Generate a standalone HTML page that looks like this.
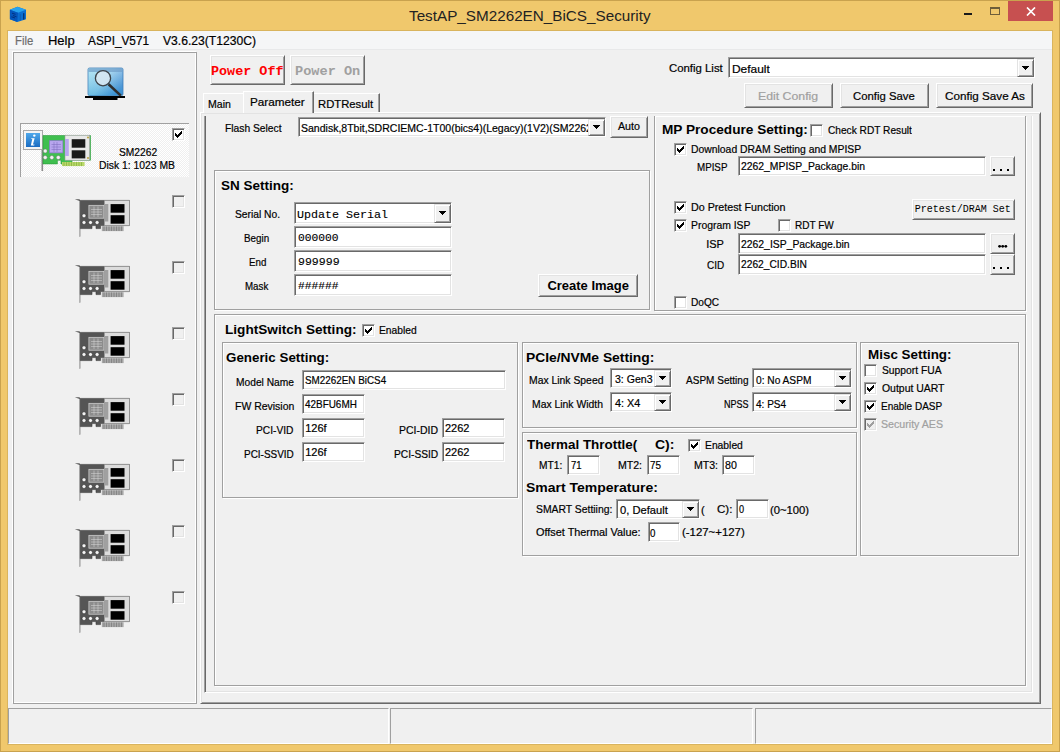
<!DOCTYPE html><html><head><meta charset="utf-8"><style>
*{box-sizing:border-box;margin:0;padding:0}
html,body{width:1060px;height:752px;overflow:hidden}
body{background:#F0C86C;position:relative;font-family:"Liberation Sans",sans-serif;font-size:11px;color:#000}
.a{position:absolute}
.t{position:absolute;white-space:nowrap;transform-origin:0 0}
.w{position:absolute;overflow:hidden}
.sk{position:absolute;background:#fff;border-top:1px solid #A0A0A0;border-left:1px solid #A0A0A0;border-bottom:1px solid #fff;border-right:1px solid #fff;box-shadow:inset 1px 1px 0 #696969,inset -1px -1px 0 #E3E3E3}
.bt{position:absolute;background:#F0F0F0;border-top:1px solid #fff;border-left:1px solid #fff;border-bottom:1px solid #696969;border-right:1px solid #696969;box-shadow:inset 1px 1px 0 #E3E3E3,inset -1px -1px 0 #A0A0A0}
.et{position:absolute;border:1px solid #A0A0A0;box-shadow:inset 1px 1px 0 #fff,1px 1px 0 #fff}
.cb{position:absolute;background:#fff;border-top:1px solid #A0A0A0;border-left:1px solid #A0A0A0;border-bottom:1px solid #fff;border-right:1px solid #fff;box-shadow:inset 1px 1px 0 #696969,inset -1px -1px 0 #E3E3E3}
.dd{position:absolute;top:1px;right:0;bottom:0;background:#F0F0F0;border-top:1px solid #E3E3E3;border-left:1px solid #E3E3E3;border-bottom:1px solid #696969;border-right:1px solid #696969;box-shadow:inset 1px 1px 0 #fff,inset -1px -1px 0 #A0A0A0}
</style></head><body>
<div class="a" style="left:0;top:0;width:1060px;height:752px;border:1px solid #C9A24E"></div>
<svg class="a" style="left:6px;top:4px" width="24" height="22" viewBox="6 4 24 22"><path d="M17.5 6.8 L26 9.8 L26 19.2 L17.3 22 L9.9 19.2 L9.9 9.8 Z" fill="#0A6ED2"/><path d="M17.5 6.8 L26 9.8 L18 12.8 L9.9 9.8 Z" fill="#26A2EE"/><path d="M9.9 9.8 L18 12.8 L17.3 22 L9.9 19.2 Z" fill="#0456BC"/><path d="M12 13.2 L15.5 14.3 M13 15.5 L16.5 16.8 M11.5 16.8 L15 18" stroke="#022E78" stroke-width="0.9"/><path d="M23.8 13.2 V19.6" stroke="#021E50" stroke-width="1"/><path d="M20.3 14.2 V20.5" stroke="#0A5AB0" stroke-width="0.8"/></svg>
<div class="t" id="t0" style="left:409.00px;top:7px;font-size:15px;line-height:18px;color:#222;transform:scaleX(1.0168);">TestAP_SM2262EN_BiCS_Security</div>
<div class="a" style="left:964px;top:13px;width:8px;height:2px;background:#1A1A1A"></div>
<div class="a" style="left:990px;top:7px;width:10px;height:8px;border:1px solid #6E5E3A;border-top-width:2px"></div>
<div class="a" style="left:1008px;top:1px;width:45px;height:20px;background:#C75050"></div>
<svg class="a" style="left:1026px;top:7px" width="10" height="9" viewBox="0 0 10 9"><path d="M1 0.5 L9 8.5 M9 0.5 L1 8.5" stroke="#fff" stroke-width="1.7"/></svg>
<div class="a" style="left:7px;top:30px;width:1046px;height:715px;background:#F0F0F0;border:1px solid #D9B45E"></div>
<div class="a" style="left:8px;top:31px;width:1044px;height:19px;background:#F5F6F7;border-bottom:1px solid #E8E9EA"></div>
<div class="t" id="t1" style="left:15.22px;top:34px;font-size:12px;line-height:15px;color:#6D6D6D;-webkit-text-stroke:0.2px currentColor;transform:scaleX(0.9421);">File</div>
<div class="t" id="t2" style="left:48.00px;top:34px;font-size:12px;line-height:15px;-webkit-text-stroke:0.2px currentColor;transform:scaleX(1.0800);">Help</div>
<div class="t" id="t3" style="left:88.00px;top:34px;font-size:12px;line-height:15px;-webkit-text-stroke:0.2px currentColor;transform:scaleX(0.9839);">ASPI_V571</div>
<div class="t" id="t4" style="left:163.00px;top:34px;font-size:12px;line-height:15px;-webkit-text-stroke:0.2px currentColor;transform:scaleX(1.0109);">V3.6.23(T1230C)</div>
<div class="a" style="left:13px;top:52px;width:184px;height:652px;border:1px solid #A0A0A0;box-shadow:-1px -1px 0 #fff,inset -1px -1px 0 #fff"></div>
<svg class="a" style="left:80px;top:62px" width="50" height="42" viewBox="0 0 50 42"><defs><linearGradient id="sg" x1="0" y1="0" x2="1" y2="0.6"><stop offset="0" stop-color="#9fe0f2"/><stop offset="0.55" stop-color="#8cc8ea"/><stop offset="1" stop-color="#3d86d2"/></linearGradient><linearGradient id="sg2" x1="0" y1="0" x2="0" y2="1"><stop offset="0" stop-color="#ffffff" stop-opacity="0.25"/><stop offset="1" stop-color="#2aa0d0" stop-opacity="0.35"/></linearGradient></defs><rect x="8" y="6" width="35" height="27.5" rx="1.5" fill="url(#sg)" stroke="#3f7fb8" stroke-width="0.8"/><rect x="8.5" y="6.5" width="34" height="27" fill="url(#sg2)"/><rect x="8.5" y="6.5" width="34" height="3.5" fill="#6f9cc8" opacity="0.7"/><circle cx="23" cy="16.2" r="7.6" fill="#dce9f2" fill-opacity="0.85" stroke="#3c4248" stroke-width="1.3"/><path d="M28.6 22.2 L40.8 33.6" stroke="#2e2e2e" stroke-width="2.6"/><path d="M5 34 H45 V36 H37.5 V38 H13 V36 H5 Z" fill="#000"/></svg>
<div class="a" style="left:20px;top:123px;width:169px;height:54px;background:repeating-conic-gradient(#fff 0 25%,#EFEFEF 0 50%) 0 0/2px 2px;border-top:1px solid #A0A0A0;border-left:1px solid #A0A0A0"></div>
<svg class="a" style="left:23px;top:130px" width="20" height="20" viewBox="0 0 20 20"><defs><linearGradient id="ig" x1="0" y1="0" x2="0" y2="1"><stop offset="0" stop-color="#4fa8ea"/><stop offset="1" stop-color="#1a6cc2"/></linearGradient></defs><rect x="0.5" y="0.5" width="19" height="19" fill="#f4f4f4" stroke="#a8a8a8"/><rect x="3" y="3" width="14" height="14" fill="url(#ig)"/><circle cx="11.3" cy="5.6" r="1.2" fill="#fff"/><path d="M8.4 8.2 H11.6 L10 14.6 H11.5 L11.2 15.4 H7.8 L9.3 9 H8.2 Z" fill="#fff"/></svg>
<svg class="a" style="left:0;top:0" width="200" height="180" viewBox="0 0 200 180"><rect x="41.5" y="150" width="1.6" height="21" fill="#8a8a8a"/><path d="M43 135.5 H90.5 V160.2 H72 V163.9 H61 V160.2 H57.4 V163.9 H43 Z" fill="#3fbf4f" stroke="#2c9a3a" stroke-width="0.6"/><rect x="62" y="162" width="22.6" height="4.1" fill="#b9d86a"/><path d="M64 162.2 V166 M66.5 162.2 V166 M69 162.2 V166 M71.5 162.2 V166 M74 162.2 V166 M76.5 162.2 V166 M79 162.2 V166 M81.5 162.2 V166" stroke="#7fae3a" stroke-width="0.7"/><rect x="49.6" y="140.7" width="13.3" height="12.2" fill="#b8a6ee" stroke="#8a78c8" stroke-width="0.7"/><path d="M51.5 144.5 H61 M51.5 147 H61 M51.5 149.5 H61 M54 142 V152 M57 142 V152" stroke="#7a68b8" stroke-width="0.5"/><rect x="65" y="135.2" width="24.7" height="25" fill="#e8e8e8" stroke="#9a9a9a" stroke-width="0.6"/><rect x="65" y="139" width="3.8" height="17" fill="#b8a6ee"/><rect x="71.7" y="139.2" width="13.6" height="8.5" fill="#1a1a1a"/><rect x="71.7" y="150.3" width="13.6" height="8.1" fill="#1a1a1a"/><circle cx="88" cy="137.5" r="1" fill="#b8a040"/><circle cx="88" cy="158" r="1" fill="#b8a040"/><circle cx="45.2" cy="151" r="2" fill="#f2f2f2" stroke="#666" stroke-width="0.4"/><circle cx="45.2" cy="157.5" r="2" fill="#f2f2f2" stroke="#666" stroke-width="0.4"/><circle cx="51.8" cy="157.5" r="2" fill="#f2f2f2" stroke="#666" stroke-width="0.4"/><circle cx="58.3" cy="157.5" r="2" fill="#f2f2f2" stroke="#666" stroke-width="0.4"/></svg>
<div class="cb" style="left:172px;top:128px;width:13px;height:13px;background:#fff;"><svg width="7" height="7" style="position:absolute;left:2px;top:2px" shape-rendering="crispEdges"><path d="M6 0h1v1h-1zM5 1h2v1h-2zM0 2h1v1h-1zM4 2h3v1h-3zM0 3h2v1h-2zM3 3h3v1h-3zM0 4h5v1h-5zM1 5h3v1h-3zM2 6h1v1h-1z" fill="#000"/></svg></div>
<div class="t" id="t5" style="left:118.76px;top:145px;font-size:11px;line-height:14px;-webkit-text-stroke:0.2px currentColor;transform:scaleX(0.9317);">SM2262</div>
<div class="t" id="t6" style="left:99.22px;top:158px;font-size:11px;line-height:14px;-webkit-text-stroke:0.2px currentColor;transform:scaleX(0.9413);">Disk 1: 1023 MB</div>
<svg class="a" style="left:70px;top:195px" width="65" height="42" viewBox="70 195 65 42"><path d="M74.8 199.2 H79.5 L80.3 200.4 V236.6 L79.6 237 V201 Z" fill="#5a5a5a"/><path d="M80.3 200.4 H129.4 V225.6 H100.5 V228.6 H96 V225.6 H92 V228.6 H80.3 Z" fill="#555555" stroke="#3a3a3a" stroke-width="0.6"/><rect x="101.8" y="226.2" width="21.8" height="4.9" fill="#a8a8a8"/><path d="M104 226.5 V231 M106.5 226.5 V231 M109 226.5 V231 M111.5 226.5 V231 M114 226.5 V231 M116.5 226.5 V231 M119 226.5 V231 M121.5 226.5 V231" stroke="#777" stroke-width="0.7"/><rect x="88.9" y="205.3" width="15" height="12.9" fill="#8c8c8c" stroke="#d8d8d8" stroke-width="0.7"/><path d="M91 209.5 H102 M91 212 H102 M91 214.5 H102 M94 206.5 V217 M98 206.5 V217" stroke="#d8d8d8" stroke-width="0.5"/><rect x="104.3" y="200.4" width="25.1" height="25.2" fill="#dcdcdc" stroke="#8a8a8a" stroke-width="0.6"/><rect x="104.5" y="204" width="3.8" height="17.5" fill="#a0a0a0"/><rect x="110.6" y="204.1" width="13.9" height="8.6" fill="#000"/><rect x="110.6" y="215.2" width="13.9" height="8.5" fill="#000"/><circle cx="84" cy="215.8" r="2" fill="#f4f4f4" stroke="#222" stroke-width="0.5"/><circle cx="84" cy="222.5" r="2" fill="#f4f4f4" stroke="#222" stroke-width="0.5"/><circle cx="90.5" cy="222.5" r="2" fill="#f4f4f4" stroke="#222" stroke-width="0.5"/><circle cx="97.1" cy="222.5" r="2" fill="#f4f4f4" stroke="#222" stroke-width="0.5"/></svg>
<div class="cb" style="left:172px;top:195px;width:13px;height:13px;background:#F0F0F0;"></div>
<svg class="a" style="left:70px;top:261px" width="65" height="42" viewBox="70 195 65 42"><path d="M74.8 199.2 H79.5 L80.3 200.4 V236.6 L79.6 237 V201 Z" fill="#5a5a5a"/><path d="M80.3 200.4 H129.4 V225.6 H100.5 V228.6 H96 V225.6 H92 V228.6 H80.3 Z" fill="#555555" stroke="#3a3a3a" stroke-width="0.6"/><rect x="101.8" y="226.2" width="21.8" height="4.9" fill="#a8a8a8"/><path d="M104 226.5 V231 M106.5 226.5 V231 M109 226.5 V231 M111.5 226.5 V231 M114 226.5 V231 M116.5 226.5 V231 M119 226.5 V231 M121.5 226.5 V231" stroke="#777" stroke-width="0.7"/><rect x="88.9" y="205.3" width="15" height="12.9" fill="#8c8c8c" stroke="#d8d8d8" stroke-width="0.7"/><path d="M91 209.5 H102 M91 212 H102 M91 214.5 H102 M94 206.5 V217 M98 206.5 V217" stroke="#d8d8d8" stroke-width="0.5"/><rect x="104.3" y="200.4" width="25.1" height="25.2" fill="#dcdcdc" stroke="#8a8a8a" stroke-width="0.6"/><rect x="104.5" y="204" width="3.8" height="17.5" fill="#a0a0a0"/><rect x="110.6" y="204.1" width="13.9" height="8.6" fill="#000"/><rect x="110.6" y="215.2" width="13.9" height="8.5" fill="#000"/><circle cx="84" cy="215.8" r="2" fill="#f4f4f4" stroke="#222" stroke-width="0.5"/><circle cx="84" cy="222.5" r="2" fill="#f4f4f4" stroke="#222" stroke-width="0.5"/><circle cx="90.5" cy="222.5" r="2" fill="#f4f4f4" stroke="#222" stroke-width="0.5"/><circle cx="97.1" cy="222.5" r="2" fill="#f4f4f4" stroke="#222" stroke-width="0.5"/></svg>
<div class="cb" style="left:172px;top:261px;width:13px;height:13px;background:#F0F0F0;"></div>
<svg class="a" style="left:70px;top:327px" width="65" height="42" viewBox="70 195 65 42"><path d="M74.8 199.2 H79.5 L80.3 200.4 V236.6 L79.6 237 V201 Z" fill="#5a5a5a"/><path d="M80.3 200.4 H129.4 V225.6 H100.5 V228.6 H96 V225.6 H92 V228.6 H80.3 Z" fill="#555555" stroke="#3a3a3a" stroke-width="0.6"/><rect x="101.8" y="226.2" width="21.8" height="4.9" fill="#a8a8a8"/><path d="M104 226.5 V231 M106.5 226.5 V231 M109 226.5 V231 M111.5 226.5 V231 M114 226.5 V231 M116.5 226.5 V231 M119 226.5 V231 M121.5 226.5 V231" stroke="#777" stroke-width="0.7"/><rect x="88.9" y="205.3" width="15" height="12.9" fill="#8c8c8c" stroke="#d8d8d8" stroke-width="0.7"/><path d="M91 209.5 H102 M91 212 H102 M91 214.5 H102 M94 206.5 V217 M98 206.5 V217" stroke="#d8d8d8" stroke-width="0.5"/><rect x="104.3" y="200.4" width="25.1" height="25.2" fill="#dcdcdc" stroke="#8a8a8a" stroke-width="0.6"/><rect x="104.5" y="204" width="3.8" height="17.5" fill="#a0a0a0"/><rect x="110.6" y="204.1" width="13.9" height="8.6" fill="#000"/><rect x="110.6" y="215.2" width="13.9" height="8.5" fill="#000"/><circle cx="84" cy="215.8" r="2" fill="#f4f4f4" stroke="#222" stroke-width="0.5"/><circle cx="84" cy="222.5" r="2" fill="#f4f4f4" stroke="#222" stroke-width="0.5"/><circle cx="90.5" cy="222.5" r="2" fill="#f4f4f4" stroke="#222" stroke-width="0.5"/><circle cx="97.1" cy="222.5" r="2" fill="#f4f4f4" stroke="#222" stroke-width="0.5"/></svg>
<div class="cb" style="left:172px;top:327px;width:13px;height:13px;background:#F0F0F0;"></div>
<svg class="a" style="left:70px;top:393px" width="65" height="42" viewBox="70 195 65 42"><path d="M74.8 199.2 H79.5 L80.3 200.4 V236.6 L79.6 237 V201 Z" fill="#5a5a5a"/><path d="M80.3 200.4 H129.4 V225.6 H100.5 V228.6 H96 V225.6 H92 V228.6 H80.3 Z" fill="#555555" stroke="#3a3a3a" stroke-width="0.6"/><rect x="101.8" y="226.2" width="21.8" height="4.9" fill="#a8a8a8"/><path d="M104 226.5 V231 M106.5 226.5 V231 M109 226.5 V231 M111.5 226.5 V231 M114 226.5 V231 M116.5 226.5 V231 M119 226.5 V231 M121.5 226.5 V231" stroke="#777" stroke-width="0.7"/><rect x="88.9" y="205.3" width="15" height="12.9" fill="#8c8c8c" stroke="#d8d8d8" stroke-width="0.7"/><path d="M91 209.5 H102 M91 212 H102 M91 214.5 H102 M94 206.5 V217 M98 206.5 V217" stroke="#d8d8d8" stroke-width="0.5"/><rect x="104.3" y="200.4" width="25.1" height="25.2" fill="#dcdcdc" stroke="#8a8a8a" stroke-width="0.6"/><rect x="104.5" y="204" width="3.8" height="17.5" fill="#a0a0a0"/><rect x="110.6" y="204.1" width="13.9" height="8.6" fill="#000"/><rect x="110.6" y="215.2" width="13.9" height="8.5" fill="#000"/><circle cx="84" cy="215.8" r="2" fill="#f4f4f4" stroke="#222" stroke-width="0.5"/><circle cx="84" cy="222.5" r="2" fill="#f4f4f4" stroke="#222" stroke-width="0.5"/><circle cx="90.5" cy="222.5" r="2" fill="#f4f4f4" stroke="#222" stroke-width="0.5"/><circle cx="97.1" cy="222.5" r="2" fill="#f4f4f4" stroke="#222" stroke-width="0.5"/></svg>
<div class="cb" style="left:172px;top:393px;width:13px;height:13px;background:#F0F0F0;"></div>
<svg class="a" style="left:70px;top:459px" width="65" height="42" viewBox="70 195 65 42"><path d="M74.8 199.2 H79.5 L80.3 200.4 V236.6 L79.6 237 V201 Z" fill="#5a5a5a"/><path d="M80.3 200.4 H129.4 V225.6 H100.5 V228.6 H96 V225.6 H92 V228.6 H80.3 Z" fill="#555555" stroke="#3a3a3a" stroke-width="0.6"/><rect x="101.8" y="226.2" width="21.8" height="4.9" fill="#a8a8a8"/><path d="M104 226.5 V231 M106.5 226.5 V231 M109 226.5 V231 M111.5 226.5 V231 M114 226.5 V231 M116.5 226.5 V231 M119 226.5 V231 M121.5 226.5 V231" stroke="#777" stroke-width="0.7"/><rect x="88.9" y="205.3" width="15" height="12.9" fill="#8c8c8c" stroke="#d8d8d8" stroke-width="0.7"/><path d="M91 209.5 H102 M91 212 H102 M91 214.5 H102 M94 206.5 V217 M98 206.5 V217" stroke="#d8d8d8" stroke-width="0.5"/><rect x="104.3" y="200.4" width="25.1" height="25.2" fill="#dcdcdc" stroke="#8a8a8a" stroke-width="0.6"/><rect x="104.5" y="204" width="3.8" height="17.5" fill="#a0a0a0"/><rect x="110.6" y="204.1" width="13.9" height="8.6" fill="#000"/><rect x="110.6" y="215.2" width="13.9" height="8.5" fill="#000"/><circle cx="84" cy="215.8" r="2" fill="#f4f4f4" stroke="#222" stroke-width="0.5"/><circle cx="84" cy="222.5" r="2" fill="#f4f4f4" stroke="#222" stroke-width="0.5"/><circle cx="90.5" cy="222.5" r="2" fill="#f4f4f4" stroke="#222" stroke-width="0.5"/><circle cx="97.1" cy="222.5" r="2" fill="#f4f4f4" stroke="#222" stroke-width="0.5"/></svg>
<div class="cb" style="left:172px;top:459px;width:13px;height:13px;background:#F0F0F0;"></div>
<svg class="a" style="left:70px;top:525px" width="65" height="42" viewBox="70 195 65 42"><path d="M74.8 199.2 H79.5 L80.3 200.4 V236.6 L79.6 237 V201 Z" fill="#5a5a5a"/><path d="M80.3 200.4 H129.4 V225.6 H100.5 V228.6 H96 V225.6 H92 V228.6 H80.3 Z" fill="#555555" stroke="#3a3a3a" stroke-width="0.6"/><rect x="101.8" y="226.2" width="21.8" height="4.9" fill="#a8a8a8"/><path d="M104 226.5 V231 M106.5 226.5 V231 M109 226.5 V231 M111.5 226.5 V231 M114 226.5 V231 M116.5 226.5 V231 M119 226.5 V231 M121.5 226.5 V231" stroke="#777" stroke-width="0.7"/><rect x="88.9" y="205.3" width="15" height="12.9" fill="#8c8c8c" stroke="#d8d8d8" stroke-width="0.7"/><path d="M91 209.5 H102 M91 212 H102 M91 214.5 H102 M94 206.5 V217 M98 206.5 V217" stroke="#d8d8d8" stroke-width="0.5"/><rect x="104.3" y="200.4" width="25.1" height="25.2" fill="#dcdcdc" stroke="#8a8a8a" stroke-width="0.6"/><rect x="104.5" y="204" width="3.8" height="17.5" fill="#a0a0a0"/><rect x="110.6" y="204.1" width="13.9" height="8.6" fill="#000"/><rect x="110.6" y="215.2" width="13.9" height="8.5" fill="#000"/><circle cx="84" cy="215.8" r="2" fill="#f4f4f4" stroke="#222" stroke-width="0.5"/><circle cx="84" cy="222.5" r="2" fill="#f4f4f4" stroke="#222" stroke-width="0.5"/><circle cx="90.5" cy="222.5" r="2" fill="#f4f4f4" stroke="#222" stroke-width="0.5"/><circle cx="97.1" cy="222.5" r="2" fill="#f4f4f4" stroke="#222" stroke-width="0.5"/></svg>
<div class="cb" style="left:172px;top:525px;width:13px;height:13px;background:#F0F0F0;"></div>
<svg class="a" style="left:70px;top:591px" width="65" height="42" viewBox="70 195 65 42"><path d="M74.8 199.2 H79.5 L80.3 200.4 V236.6 L79.6 237 V201 Z" fill="#5a5a5a"/><path d="M80.3 200.4 H129.4 V225.6 H100.5 V228.6 H96 V225.6 H92 V228.6 H80.3 Z" fill="#555555" stroke="#3a3a3a" stroke-width="0.6"/><rect x="101.8" y="226.2" width="21.8" height="4.9" fill="#a8a8a8"/><path d="M104 226.5 V231 M106.5 226.5 V231 M109 226.5 V231 M111.5 226.5 V231 M114 226.5 V231 M116.5 226.5 V231 M119 226.5 V231 M121.5 226.5 V231" stroke="#777" stroke-width="0.7"/><rect x="88.9" y="205.3" width="15" height="12.9" fill="#8c8c8c" stroke="#d8d8d8" stroke-width="0.7"/><path d="M91 209.5 H102 M91 212 H102 M91 214.5 H102 M94 206.5 V217 M98 206.5 V217" stroke="#d8d8d8" stroke-width="0.5"/><rect x="104.3" y="200.4" width="25.1" height="25.2" fill="#dcdcdc" stroke="#8a8a8a" stroke-width="0.6"/><rect x="104.5" y="204" width="3.8" height="17.5" fill="#a0a0a0"/><rect x="110.6" y="204.1" width="13.9" height="8.6" fill="#000"/><rect x="110.6" y="215.2" width="13.9" height="8.5" fill="#000"/><circle cx="84" cy="215.8" r="2" fill="#f4f4f4" stroke="#222" stroke-width="0.5"/><circle cx="84" cy="222.5" r="2" fill="#f4f4f4" stroke="#222" stroke-width="0.5"/><circle cx="90.5" cy="222.5" r="2" fill="#f4f4f4" stroke="#222" stroke-width="0.5"/><circle cx="97.1" cy="222.5" r="2" fill="#f4f4f4" stroke="#222" stroke-width="0.5"/></svg>
<div class="cb" style="left:172px;top:591px;width:13px;height:13px;background:#F0F0F0;"></div>
<div class="bt" style="left:210px;top:55px;width:75px;height:30px;"></div>
<div class="bt" style="left:290px;top:55px;width:75px;height:30px;"></div>
<div class="t" id="t7" style="left:211.00px;top:64px;font-size:13.3px;line-height:16px;font-weight:bold;color:#FF0000;font-family:'Liberation Mono',monospace;transform:scaleX(1.0099);">Power Off</div>
<div class="t" id="t8" style="left:295.18px;top:64px;font-size:13.3px;line-height:16px;font-weight:bold;color:#A0A0A0;font-family:'Liberation Mono',monospace;transform:scaleX(1.0222);">Power On</div>
<div class="t" id="t9" style="left:669.00px;top:61px;font-size:11px;line-height:14px;-webkit-text-stroke:0.2px currentColor;transform:scaleX(1.0340);">Config List</div>
<div class="sk" style="left:728px;top:57px;width:307px;height:21px;"><div class="dd" style="width:17px"><svg width="7" height="4" style="position:absolute;left:4px;top:6px" shape-rendering="crispEdges"><path d="M0 0h7v1h-7zM1 1h5v1h-5zM2 2h3v1h-3zM3 3h1v1h-1z" fill="#000"/></svg></div></div>
<div class="t" id="t10" style="left:731.74px;top:62px;font-size:11px;line-height:14px;-webkit-text-stroke:0.2px currentColor;transform:scaleX(1.0857);">Default</div>
<div class="bt" style="left:744px;top:83px;width:89px;height:25px;"></div>
<div class="bt" style="left:840px;top:83px;width:89px;height:25px;"></div>
<div class="bt" style="left:936px;top:83px;width:97px;height:25px;"></div>
<div class="t" id="t11" style="left:758.15px;top:89px;font-size:11px;line-height:14px;color:#A0A0A0;-webkit-text-stroke:0.2px currentColor;transform:scaleX(1.1170);">Edit Config</div>
<div class="t" id="t12" style="left:853.01px;top:89px;font-size:11px;line-height:14px;-webkit-text-stroke:0.2px currentColor;transform:scaleX(1.0295);">Config Save</div>
<div class="t" id="t13" style="left:944.62px;top:89px;font-size:11px;line-height:14px;-webkit-text-stroke:0.2px currentColor;transform:scaleX(1.0618);">Config Save As</div>
<div class="a" style="left:200px;top:112px;width:841px;height:592px;border-left:1px solid #fff;border-top:1px solid #fff;border-right:1px solid #696969;border-bottom:1px solid #696969;box-shadow:inset 1px 1px 0 #E3E3E3,inset -1px -1px 0 #A0A0A0"></div>
<div class="a" style="left:203px;top:93px;width:41px;height:20px;border-left:1px solid #fff;border-top:1px solid #fff;border-right:1px solid #fff;background:#F0F0F0"></div>
<div class="a" style="left:313px;top:93px;width:67px;height:19px;border-top:1px solid #fff;border-right:1px solid #696969;box-shadow:inset -1px 0 0 #A0A0A0;background:#F0F0F0"></div>
<div class="a" style="left:243px;top:91px;width:71px;height:22px;border-left:1px solid #fff;border-top:1px solid #fff;border-right:1px solid #696969;box-shadow:inset -1px 0 0 #A0A0A0;background:#F0F0F0"></div>
<div class="t" id="t14" style="left:208.38px;top:97px;font-size:11px;line-height:14px;-webkit-text-stroke:0.2px currentColor;transform:scaleX(0.9583);">Main</div>
<div class="t" id="t15" style="left:250.00px;top:95px;font-size:11px;line-height:14px;-webkit-text-stroke:0.2px currentColor;transform:scaleX(1.0654);">Parameter</div>
<div class="t" id="t16" style="left:318.00px;top:97px;font-size:11px;line-height:14px;-webkit-text-stroke:0.2px currentColor;transform:scaleX(1.0241);">RDTResult</div>
<div class="a" style="left:204px;top:116px;width:829px;height:577px;border-left:1px solid #A0A0A0;border-right:1px solid #fff;border-bottom:1px solid #fff;box-shadow:inset 1px 0 0 #696969,inset -1px -1px 0 #E3E3E3"></div>
<div class="t" id="t17" style="left:225.41px;top:121px;font-size:11px;line-height:14px;-webkit-text-stroke:0.2px currentColor;transform:scaleX(0.9344);">Flash Select</div>
<div class="sk" style="left:298px;top:117px;width:308px;height:20px;"><div class="dd" style="width:17px"><svg width="7" height="4" style="position:absolute;left:4px;top:5px" shape-rendering="crispEdges"><path d="M0 0h7v1h-7zM1 1h5v1h-5zM2 2h3v1h-3zM3 3h1v1h-1z" fill="#000"/></svg></div></div>
<div class="w" style="left:300px;top:119px;width:288px;height:16px"><div class="t" id="t18" style="left:1.19px;top:2px;font-size:11px;line-height:14px;-webkit-text-stroke:0.2px currentColor;transform:scaleX(0.9556);">Sandisk,8Tbit,SDRCIEMC-1T00(bics4)(Legacy)(1V2)(SM2262EN)</div></div>
<div class="bt" style="left:610px;top:116px;width:38px;height:22px;"></div>
<div class="t" id="t19" style="left:617.57px;top:119px;font-size:11px;line-height:14px;-webkit-text-stroke:0.2px currentColor;transform:scaleX(0.9696);">Auto</div>
<div class="et" style="left:214px;top:170px;width:436px;height:140px;"></div>
<div class="t" id="t20" style="left:221.38px;top:178px;font-size:13px;line-height:16px;font-weight:bold;transform:scaleX(1.0377);">SN Setting:</div>
<div class="t" id="t21" style="left:234.61px;top:207px;font-size:11px;line-height:14px;-webkit-text-stroke:0.2px currentColor;transform:scaleX(0.9333);">Serial No.</div>
<div class="t" id="t22" style="left:244.05px;top:231px;font-size:11px;line-height:14px;-webkit-text-stroke:0.2px currentColor;transform:scaleX(0.8929);">Begin</div>
<div class="t" id="t23" style="left:248.56px;top:255px;font-size:11px;line-height:14px;-webkit-text-stroke:0.2px currentColor;transform:scaleX(0.8850);">End</div>
<div class="t" id="t24" style="left:245.06px;top:279px;font-size:11px;line-height:14px;-webkit-text-stroke:0.2px currentColor;transform:scaleX(0.8846);">Mask</div>
<div class="sk" style="left:294px;top:202px;width:158px;height:22px;"><div class="dd" style="width:17px"><svg width="7" height="4" style="position:absolute;left:4px;top:6px" shape-rendering="crispEdges"><path d="M0 0h7v1h-7zM1 1h5v1h-5zM2 2h3v1h-3zM3 3h1v1h-1z" fill="#000"/></svg></div></div>
<div class="sk" style="left:294px;top:226px;width:158px;height:22px;"></div>
<div class="sk" style="left:294px;top:250px;width:158px;height:22px;"></div>
<div class="sk" style="left:294px;top:274px;width:158px;height:22px;"></div>
<div class="t" id="t25" style="left:297.38px;top:208px;font-size:11.5px;line-height:14px;font-family:'Liberation Mono',monospace;-webkit-text-stroke:0.12px currentColor;transform:scaleX(1.0146);">Update Serial</div>
<div class="t" id="t26" style="left:297.59px;top:231px;font-size:11.5px;line-height:14px;font-family:'Liberation Mono',monospace;-webkit-text-stroke:0.12px currentColor;transform:scaleX(0.9810);">000000</div>
<div class="t" id="t27" style="left:297.60px;top:255px;font-size:11.5px;line-height:14px;font-family:'Liberation Mono',monospace;-webkit-text-stroke:0.12px currentColor;transform:scaleX(1.0049);">999999</div>
<div class="t" id="t28" style="left:297.59px;top:279px;font-size:11.5px;line-height:14px;font-family:'Liberation Mono',monospace;-webkit-text-stroke:0.12px currentColor;transform:scaleX(0.9810);">######</div>
<div class="bt" style="left:538px;top:274px;width:100px;height:23px;"></div>
<div class="t" id="t29" style="left:547.39px;top:278px;font-size:13px;line-height:16px;font-weight:bold;">Create Image</div>
<div class="a" style="left:654px;top:116px;width:372px;height:195px;border:1px solid #A0A0A0;border-top:0;box-shadow:inset 1px 1px 0 #fff,1px 1px 0 #fff"></div>
<div class="t" id="t30" style="left:662.00px;top:122px;font-size:13px;line-height:16px;font-weight:bold;transform:scaleX(1.0478);">MP Procedure Setting:</div>
<div class="cb" style="left:810px;top:124px;width:13px;height:13px;background:#fff;"></div>
<div class="t" id="t31" style="left:827.76px;top:123px;font-size:11px;line-height:14px;-webkit-text-stroke:0.2px currentColor;transform:scaleX(0.9228);">Check RDT Result</div>
<div class="cb" style="left:674px;top:143px;width:13px;height:13px;background:#fff;"><svg width="7" height="7" style="position:absolute;left:2px;top:2px" shape-rendering="crispEdges"><path d="M6 0h1v1h-1zM5 1h2v1h-2zM0 2h1v1h-1zM4 2h3v1h-3zM0 3h2v1h-2zM3 3h3v1h-3zM0 4h5v1h-5zM1 5h3v1h-3zM2 6h1v1h-1z" fill="#000"/></svg></div>
<div class="t" id="t32" style="left:691.03px;top:142px;font-size:11px;line-height:14px;-webkit-text-stroke:0.2px currentColor;transform:scaleX(0.9433);">Download DRAM Setting and MPISP</div>
<div class="t" id="t33" style="left:697.37px;top:160px;font-size:11px;line-height:14px;-webkit-text-stroke:0.2px currentColor;transform:scaleX(0.8882);">MPISP</div>
<div class="sk" style="left:738px;top:156px;width:248px;height:20px;"></div>
<div class="t" id="t34" style="left:740.61px;top:159px;font-size:11px;line-height:14px;-webkit-text-stroke:0.2px currentColor;transform:scaleX(0.9435);">2262_MPISP_Package.bin</div>
<div class="bt" style="left:990px;top:156px;width:25px;height:20px;"></div>
<div class="a" style="left:993px;top:169px;width:2px;height:2px;background:#000"></div><div class="a" style="left:1000px;top:169px;width:2px;height:2px;background:#000"></div><div class="a" style="left:1007px;top:169px;width:2px;height:2px;background:#000"></div>
<div class="cb" style="left:674px;top:201px;width:13px;height:13px;background:#fff;"><svg width="7" height="7" style="position:absolute;left:2px;top:2px" shape-rendering="crispEdges"><path d="M6 0h1v1h-1zM5 1h2v1h-2zM0 2h1v1h-1zM4 2h3v1h-3zM0 3h2v1h-2zM3 3h3v1h-3zM0 4h5v1h-5zM1 5h3v1h-3zM2 6h1v1h-1z" fill="#000"/></svg></div>
<div class="t" id="t35" style="left:691.01px;top:200px;font-size:11px;line-height:14px;-webkit-text-stroke:0.2px currentColor;transform:scaleX(0.9722);">Do Pretest Function</div>
<div class="bt" style="left:912px;top:199px;width:103px;height:21px;"></div>
<div class="t" id="t36" style="left:914.79px;top:203px;font-size:10px;line-height:13px;font-family:'Liberation Mono',monospace;">Pretest/DRAM Set</div>
<div class="cb" style="left:674px;top:219px;width:13px;height:13px;background:#fff;"><svg width="7" height="7" style="position:absolute;left:2px;top:2px" shape-rendering="crispEdges"><path d="M6 0h1v1h-1zM5 1h2v1h-2zM0 2h1v1h-1zM4 2h3v1h-3zM0 3h2v1h-2zM3 3h3v1h-3zM0 4h5v1h-5zM1 5h3v1h-3zM2 6h1v1h-1z" fill="#000"/></svg></div>
<div class="t" id="t37" style="left:691.03px;top:218px;font-size:11px;line-height:14px;-webkit-text-stroke:0.2px currentColor;transform:scaleX(0.9444);">Program ISP</div>
<div class="cb" style="left:778px;top:219px;width:13px;height:13px;background:#fff;"></div>
<div class="t" id="t38" style="left:795.00px;top:218px;font-size:11px;line-height:14px;-webkit-text-stroke:0.2px currentColor;transform:scaleX(0.9116);">RDT FW</div>
<div class="t" id="t39" style="left:706.19px;top:237px;font-size:11px;line-height:14px;-webkit-text-stroke:0.2px currentColor;">ISP</div>
<div class="sk" style="left:738px;top:233px;width:248px;height:21px;"></div>
<div class="t" id="t40" style="left:740.61px;top:237px;font-size:11px;line-height:14px;-webkit-text-stroke:0.2px currentColor;transform:scaleX(0.9443);">2262_ISP_Package.bin</div>
<div class="bt" style="left:990px;top:233px;width:25px;height:21px;"></div>
<svg class="a" style="left:998px;top:244px" width="10" height="5"><circle cx="1.6" cy="2.3" r="1.4" fill="#000"/><circle cx="4.7" cy="2.3" r="1.4" fill="#000"/><circle cx="7.8" cy="2.3" r="1.4" fill="#000"/></svg>
<div class="t" id="t41" style="left:707.14px;top:258px;font-size:11px;line-height:14px;-webkit-text-stroke:0.2px currentColor;transform:scaleX(0.9050);">CID</div>
<div class="sk" style="left:738px;top:254px;width:248px;height:21px;"></div>
<div class="t" id="t42" style="left:740.61px;top:257px;font-size:11px;line-height:14px;-webkit-text-stroke:0.2px currentColor;transform:scaleX(0.9300);">2262_CID.BIN</div>
<div class="bt" style="left:990px;top:254px;width:25px;height:21px;"></div>
<div class="a" style="left:993px;top:267px;width:2px;height:2px;background:#000"></div><div class="a" style="left:1000px;top:267px;width:2px;height:2px;background:#000"></div><div class="a" style="left:1007px;top:267px;width:2px;height:2px;background:#000"></div>
<div class="cb" style="left:674px;top:296px;width:13px;height:13px;background:#fff;"></div>
<div class="t" id="t43" style="left:691.23px;top:295px;font-size:11px;line-height:14px;-webkit-text-stroke:0.2px currentColor;transform:scaleX(0.9200);">DoQC</div>
<div class="et" style="left:214px;top:314px;width:812px;height:372px;"></div>
<div class="t" id="t44" style="left:225.35px;top:322px;font-size:13px;line-height:16px;font-weight:bold;transform:scaleX(1.0468);">LightSwitch Setting:</div>
<div class="cb" style="left:362px;top:324px;width:13px;height:13px;background:#fff;"><svg width="7" height="7" style="position:absolute;left:2px;top:2px" shape-rendering="crispEdges"><path d="M6 0h1v1h-1zM5 1h2v1h-2zM0 2h1v1h-1zM4 2h3v1h-3zM0 3h2v1h-2zM3 3h3v1h-3zM0 4h5v1h-5zM1 5h3v1h-3zM2 6h1v1h-1z" fill="#000"/></svg></div>
<div class="t" id="t45" style="left:378.83px;top:323px;font-size:11px;line-height:14px;-webkit-text-stroke:0.2px currentColor;transform:scaleX(0.9350);">Enabled</div>
<div class="et" style="left:222px;top:342px;width:296px;height:156px;"></div>
<div class="t" id="t46" style="left:226.39px;top:350px;font-size:13px;line-height:16px;font-weight:bold;transform:scaleX(1.0280);">Generic Setting:</div>
<div class="t" id="t47" style="left:235.83px;top:375px;font-size:11px;line-height:14px;-webkit-text-stroke:0.2px currentColor;transform:scaleX(0.9290);">Model Name</div>
<div class="sk" style="left:302px;top:370px;width:204px;height:20px;"></div>
<div class="t" id="t48" style="left:304.75px;top:373px;font-size:11px;line-height:14px;-webkit-text-stroke:0.2px currentColor;transform:scaleX(0.8967);">SM2262EN BiCS4</div>
<div class="t" id="t49" style="left:235.00px;top:399px;font-size:11px;line-height:14px;-webkit-text-stroke:0.2px currentColor;transform:scaleX(0.9516);">FW Revision</div>
<div class="sk" style="left:302px;top:394px;width:63px;height:20px;"></div>
<div class="t" id="t50" style="left:305.00px;top:397px;font-size:11px;line-height:14px;-webkit-text-stroke:0.2px currentColor;transform:scaleX(0.9018);">42BFU6MH</div>
<div class="t" id="t51" style="left:256.00px;top:423px;font-size:11px;line-height:14px;-webkit-text-stroke:0.2px currentColor;transform:scaleX(0.9268);">PCI-VID</div>
<div class="sk" style="left:302px;top:418px;width:63px;height:20px;"></div>
<div class="t" id="t52" style="left:305.19px;top:421px;font-size:11px;line-height:14px;-webkit-text-stroke:0.2px currentColor;">126f</div>
<div class="t" id="t53" style="left:244.37px;top:447px;font-size:11px;line-height:14px;-webkit-text-stroke:0.2px currentColor;transform:scaleX(0.9055);">PCI-SSVID</div>
<div class="sk" style="left:302px;top:442px;width:63px;height:20px;"></div>
<div class="t" id="t54" style="left:305.19px;top:445px;font-size:11px;line-height:14px;-webkit-text-stroke:0.2px currentColor;">126f</div>
<div class="t" id="t55" style="left:399.00px;top:423px;font-size:11px;line-height:14px;-webkit-text-stroke:0.2px currentColor;transform:scaleX(0.9512);">PCI-DID</div>
<div class="sk" style="left:442px;top:418px;width:63px;height:20px;"></div>
<div class="t" id="t56" style="left:445.00px;top:421px;font-size:11px;line-height:14px;-webkit-text-stroke:0.2px currentColor;">2262</div>
<div class="t" id="t57" style="left:393.83px;top:447px;font-size:11px;line-height:14px;-webkit-text-stroke:0.2px currentColor;transform:scaleX(0.9277);">PCI-SSID</div>
<div class="sk" style="left:442px;top:442px;width:63px;height:20px;"></div>
<div class="t" id="t58" style="left:445.00px;top:445px;font-size:11px;line-height:14px;-webkit-text-stroke:0.2px currentColor;">2262</div>
<div class="et" style="left:522px;top:342px;width:335px;height:86px;"></div>
<div class="t" id="t59" style="left:526.17px;top:350px;font-size:13px;line-height:16px;font-weight:bold;transform:scaleX(1.0642);">PCIe/NVMe Setting:</div>
<div class="t" id="t60" style="left:528.82px;top:373px;font-size:11px;line-height:14px;-webkit-text-stroke:0.2px currentColor;transform:scaleX(0.9436);">Max Link Speed</div>
<div class="sk" style="left:610px;top:368px;width:62px;height:20px;"><div class="dd" style="width:17px"><svg width="7" height="4" style="position:absolute;left:4px;top:5px" shape-rendering="crispEdges"><path d="M0 0h7v1h-7zM1 1h5v1h-5zM2 2h3v1h-3zM3 3h1v1h-1z" fill="#000"/></svg></div></div>
<div class="t" id="t61" style="left:614.58px;top:372px;font-size:11px;line-height:14px;-webkit-text-stroke:0.2px currentColor;transform:scaleX(0.9590);">3: Gen3</div>
<div class="t" id="t62" style="left:686.33px;top:373px;font-size:11px;line-height:14px;-webkit-text-stroke:0.2px currentColor;transform:scaleX(0.9130);">ASPM Setting</div>
<div class="sk" style="left:752px;top:368px;width:100px;height:20px;"><div class="dd" style="width:17px"><svg width="7" height="4" style="position:absolute;left:4px;top:5px" shape-rendering="crispEdges"><path d="M0 0h7v1h-7zM1 1h5v1h-5zM2 2h3v1h-3zM3 3h1v1h-1z" fill="#000"/></svg></div></div>
<div class="t" id="t63" style="left:756.15px;top:373px;font-size:11px;line-height:14px;-webkit-text-stroke:0.2px currentColor;transform:scaleX(0.9250);">0: No ASPM</div>
<div class="t" id="t64" style="left:532.38px;top:397px;font-size:11px;line-height:14px;-webkit-text-stroke:0.2px currentColor;transform:scaleX(0.9440);">Max Link Width</div>
<div class="sk" style="left:610px;top:392px;width:62px;height:20px;"><div class="dd" style="width:17px"><svg width="7" height="4" style="position:absolute;left:4px;top:5px" shape-rendering="crispEdges"><path d="M0 0h7v1h-7zM1 1h5v1h-5zM2 2h3v1h-3zM3 3h1v1h-1z" fill="#000"/></svg></div></div>
<div class="t" id="t65" style="left:614.59px;top:396px;font-size:11px;line-height:14px;-webkit-text-stroke:0.2px currentColor;transform:scaleX(0.9885);">4: X4</div>
<div class="t" id="t66" style="left:723.54px;top:397px;font-size:11px;line-height:14px;-webkit-text-stroke:0.2px currentColor;transform:scaleX(0.8200);">NPSS</div>
<div class="sk" style="left:752px;top:392px;width:100px;height:20px;"><div class="dd" style="width:17px"><svg width="7" height="4" style="position:absolute;left:4px;top:5px" shape-rendering="crispEdges"><path d="M0 0h7v1h-7zM1 1h5v1h-5zM2 2h3v1h-3zM3 3h1v1h-1z" fill="#000"/></svg></div></div>
<div class="t" id="t67" style="left:756.14px;top:397px;font-size:11px;line-height:14px;-webkit-text-stroke:0.2px currentColor;transform:scaleX(0.9118);">4: PS4</div>
<div class="et" style="left:522px;top:432px;width:335px;height:124px;"></div>
<div class="t" id="t68" style="left:527.21px;top:437px;font-size:13px;line-height:16px;font-weight:bold;transform:scaleX(1.0315);">Thermal Throttle(</div>
<div class="t" id="t69" style="left:654.78px;top:437px;font-size:13px;line-height:16px;font-weight:bold;transform:scaleX(1.0765);">C):</div>
<div class="cb" style="left:688px;top:439px;width:13px;height:13px;background:#fff;"><svg width="7" height="7" style="position:absolute;left:2px;top:2px" shape-rendering="crispEdges"><path d="M6 0h1v1h-1zM5 1h2v1h-2zM0 2h1v1h-1zM4 2h3v1h-3zM0 3h2v1h-2zM3 3h3v1h-3zM0 4h5v1h-5zM1 5h3v1h-3zM2 6h1v1h-1z" fill="#000"/></svg></div>
<div class="t" id="t70" style="left:705.03px;top:438px;font-size:11px;line-height:14px;-webkit-text-stroke:0.2px currentColor;transform:scaleX(0.9375);">Enabled</div>
<div class="t" id="t71" style="left:538.58px;top:458px;font-size:11px;line-height:14px;-webkit-text-stroke:0.2px currentColor;transform:scaleX(0.9280);">MT1:</div>
<div class="sk" style="left:567px;top:455px;width:33px;height:20px;"></div>
<div class="t" id="t72" style="left:570.74px;top:458px;font-size:11px;line-height:14px;-webkit-text-stroke:0.2px currentColor;transform:scaleX(0.8692);">71</div>
<div class="t" id="t73" style="left:618.00px;top:458px;font-size:11px;line-height:14px;-webkit-text-stroke:0.2px currentColor;transform:scaleX(0.9600);">MT2:</div>
<div class="sk" style="left:647px;top:455px;width:33px;height:20px;"></div>
<div class="t" id="t74" style="left:650.37px;top:458px;font-size:11px;line-height:14px;-webkit-text-stroke:0.2px currentColor;transform:scaleX(0.9000);">75</div>
<div class="t" id="t75" style="left:694.00px;top:458px;font-size:11px;line-height:14px;-webkit-text-stroke:0.2px currentColor;transform:scaleX(0.9600);">MT3:</div>
<div class="sk" style="left:722px;top:455px;width:33px;height:20px;"></div>
<div class="t" id="t76" style="left:724.60px;top:458px;font-size:11px;line-height:14px;-webkit-text-stroke:0.2px currentColor;transform:scaleX(0.9667);">80</div>
<div class="t" id="t77" style="left:526.16px;top:480px;font-size:13px;line-height:16px;font-weight:bold;transform:scaleX(1.0760);">Smart Temperature:</div>
<div class="t" id="t78" style="left:535.61px;top:502px;font-size:11px;line-height:14px;-webkit-text-stroke:0.2px currentColor;transform:scaleX(0.9437);">SMART Settiing:</div>
<div class="sk" style="left:616px;top:499px;width:84px;height:20px;"><div class="dd" style="width:17px"><svg width="7" height="4" style="position:absolute;left:4px;top:5px" shape-rendering="crispEdges"><path d="M0 0h7v1h-7zM1 1h5v1h-5zM2 2h3v1h-3zM3 3h1v1h-1z" fill="#000"/></svg></div></div>
<div class="t" id="t79" style="left:619.60px;top:503px;font-size:11px;line-height:14px;-webkit-text-stroke:0.2px currentColor;transform:scaleX(1.0146);">0, Default</div>
<div class="t" id="t80" style="left:701.00px;top:503px;font-size:11px;line-height:14px;-webkit-text-stroke:0.2px currentColor;">(</div>
<div class="t" id="t81" style="left:716.79px;top:502px;font-size:11px;line-height:14px;-webkit-text-stroke:0.2px currentColor;transform:scaleX(1.0500);">C):</div>
<div class="sk" style="left:736px;top:499px;width:33px;height:20px;"></div>
<div class="t" id="t82" style="left:739.00px;top:502px;font-size:11px;line-height:14px;-webkit-text-stroke:0.2px currentColor;transform:scaleX(0.8333);">0</div>
<div class="t" id="t83" style="left:769.59px;top:503px;font-size:11px;line-height:14px;-webkit-text-stroke:0.2px currentColor;transform:scaleX(1.0211);">(0~100)</div>
<div class="t" id="t84" style="left:535.60px;top:525px;font-size:11px;line-height:14px;-webkit-text-stroke:0.2px currentColor;transform:scaleX(0.9886);">Offset Thermal Value:</div>
<div class="sk" style="left:648px;top:522px;width:32px;height:20px;"></div>
<div class="t" id="t85" style="left:650.37px;top:526px;font-size:11px;line-height:14px;-webkit-text-stroke:0.2px currentColor;transform:scaleX(0.8857);">0</div>
<div class="t" id="t86" style="left:682.00px;top:525px;font-size:11px;line-height:14px;-webkit-text-stroke:0.2px currentColor;transform:scaleX(1.0361);">(-127~+127)</div>
<div class="et" style="left:860px;top:342px;width:159px;height:214px;"></div>
<div class="t" id="t87" style="left:868.18px;top:347px;font-size:13px;line-height:16px;font-weight:bold;transform:scaleX(1.0325);">Misc Setting:</div>
<div class="cb" style="left:864px;top:364px;width:13px;height:13px;background:#fff;"></div>
<div class="t" id="t88" style="left:881.97px;top:363px;font-size:11px;line-height:14px;-webkit-text-stroke:0.2px currentColor;transform:scaleX(0.9369);">Support FUA</div>
<div class="cb" style="left:864px;top:382px;width:13px;height:13px;background:#fff;"><svg width="7" height="7" style="position:absolute;left:2px;top:2px" shape-rendering="crispEdges"><path d="M6 0h1v1h-1zM5 1h2v1h-2zM0 2h1v1h-1zM4 2h3v1h-3zM0 3h2v1h-2zM3 3h3v1h-3zM0 4h5v1h-5zM1 5h3v1h-3zM2 6h1v1h-1z" fill="#000"/></svg></div>
<div class="t" id="t89" style="left:881.97px;top:381px;font-size:11px;line-height:14px;-webkit-text-stroke:0.2px currentColor;transform:scaleX(0.9493);">Output UART</div>
<div class="cb" style="left:864px;top:400px;width:13px;height:13px;background:#fff;"><svg width="7" height="7" style="position:absolute;left:2px;top:2px" shape-rendering="crispEdges"><path d="M6 0h1v1h-1zM5 1h2v1h-2zM0 2h1v1h-1zM4 2h3v1h-3zM0 3h2v1h-2zM3 3h3v1h-3zM0 4h5v1h-5zM1 5h3v1h-3zM2 6h1v1h-1z" fill="#000"/></svg></div>
<div class="t" id="t90" style="left:881.05px;top:399px;font-size:11px;line-height:14px;-webkit-text-stroke:0.2px currentColor;transform:scaleX(0.9090);">Enable DASP</div>
<div class="cb" style="left:864px;top:418px;width:13px;height:13px;background:#F0F0F0;"><svg width="7" height="7" style="position:absolute;left:2px;top:2px" shape-rendering="crispEdges"><path d="M6 0h1v1h-1zM5 1h2v1h-2zM0 2h1v1h-1zM4 2h3v1h-3zM0 3h2v1h-2zM3 3h3v1h-3zM0 4h5v1h-5zM1 5h3v1h-3zM2 6h1v1h-1z" fill="#A0A0A0"/></svg></div>
<div class="t" id="t91" style="left:881.02px;top:417px;font-size:11px;line-height:14px;color:#A0A0A0;-webkit-text-stroke:0.2px currentColor;transform:scaleX(0.9667);">Security AES</div>
<div class="a" style="left:8px;top:708px;width:381px;height:36px;border-top:1px solid #A0A0A0;border-left:1px solid #A0A0A0;border-right:1px solid #fff;border-bottom:1px solid #fff"></div>
<div class="a" style="left:390px;top:708px;width:363px;height:36px;border-top:1px solid #A0A0A0;border-left:1px solid #A0A0A0;border-right:1px solid #fff;border-bottom:1px solid #fff"></div>
<div class="a" style="left:755px;top:708px;width:297px;height:36px;border-top:1px solid #A0A0A0;border-left:1px solid #A0A0A0;border-right:1px solid #fff;border-bottom:1px solid #fff"></div>
</body></html>
